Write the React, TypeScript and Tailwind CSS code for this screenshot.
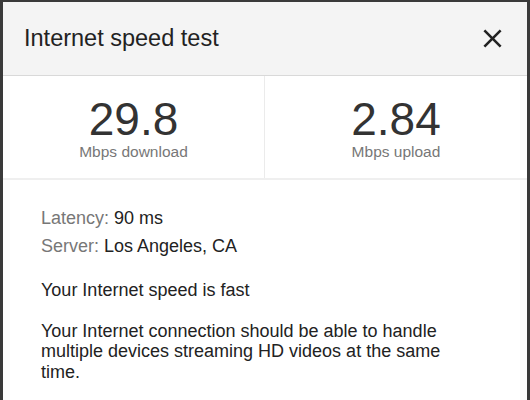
export default function App() {
  const font = { fontFamily: '"Liberation Sans", Arial, Helvetica, sans-serif' }

  return (
    <div className="h-[400px] w-[530px] overflow-hidden bg-[#3a3a3a] px-[3px] pt-[2px]" style={font}>
      <div className="h-full bg-white">
        <div className="flex h-[74px] items-center justify-between border-b border-[#d9d9d9] bg-[#f4f4f4] pl-[21px] pr-[19px]">
          <h1 className="text-[23.5px] leading-normal text-[#222]">Internet speed test</h1>
          <button className="text-[#222]">
            <svg viewBox="0 0 24 24" className="h-[31px] w-[31px]" fill="currentColor">
              <path d="M19 6.41L17.59 5 12 10.59 6.41 5 5 6.41 10.59 12 5 17.59 6.41 19 12 13.41 17.59 19 19 17.59 13.41 12z" />
            </svg>
          </button>
        </div>

        <div className="grid grid-cols-2 border-b-2 border-[#efefef]">
          <div className="flex flex-col items-center border-r border-[#ebebeb] pb-4 pt-[22px]">
            <div className="text-[46px] leading-[42px] text-[#333]">29.8</div>
            <div className="mt-[2px] text-[15.5px] leading-[20px] text-[#777]">Mbps download</div>
          </div>
          <div className="flex flex-col items-center pb-4 pt-[22px]">
            <div className="text-[46px] leading-[42px] text-[#333]">2.84</div>
            <div className="mt-[2px] text-[15.5px] leading-[20px] text-[#777]">Mbps upload</div>
          </div>
        </div>

        <div className="pl-[38px] pr-6 pt-[24px] text-[18px] text-[#222]">
          <div className="leading-[28px]">
            <span className="text-[#777]">Latency:</span> 90 ms
          </div>
          <div className="leading-[28px]">
            <span className="text-[#777]">Server:</span> Los Angeles, CA
          </div>
          <p className="mt-5 leading-[20.5px]">Your Internet speed is fast</p>
          <p className="mt-5 w-[400px] leading-[20.5px]">
            Your Internet connection should be able to handle multiple devices streaming HD videos at the same time.
          </p>
        </div>
      </div>
    </div>
  )
}
